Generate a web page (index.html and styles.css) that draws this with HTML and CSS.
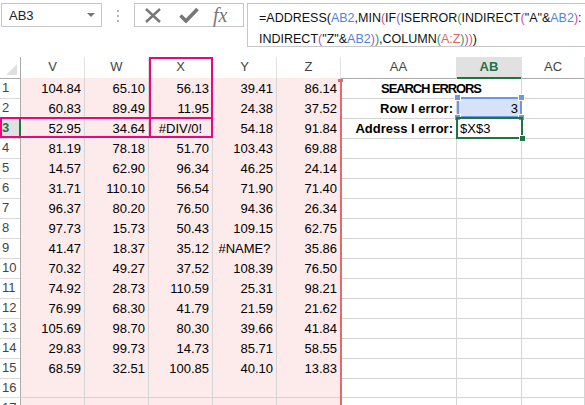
FILE: index.html
```html
<!DOCTYPE html>
<html lang="en">

<head>
	<meta charset="UTF-8">
	<title>Search errors</title>
	<link rel="stylesheet" href="styles.css">
</head>

<body>
	<div class="topbar">
		<div class="name-box"><span>AB3</span><span class="arrow"></span></div>
		<div class="grip"><i></i><i></i><i></i></div>
		<div class="fx-buttons">
			<svg width="18" height="15" viewBox="0 0 18 15"><path d="M2 1 L16 14 M16 1 L2 14" stroke="#777" stroke-width="2.4" fill="none"/></svg>
			<svg width="20" height="16" viewBox="0 0 20 16"><path d="M1.5 8.5 L7 14 L18.5 2" stroke="#777" stroke-width="3.6" fill="none"/></svg>
			<span class="fx">fx</span>
		</div>
		<div class="formula">=ADDRESS(<span class="ref">AB2</span>,MIN<span class="p1">(</span>IF<span class="p2">(</span>ISERROR<span class="p3">(</span>INDIRECT<span class="p4">(</span>"A"&amp;<span class="ref">AB2</span><span class="p4">)</span>:<br>INDIRECT<span class="p4">(</span>"Z"&amp;<span class="ref">AB2</span><span class="p4">)</span><span class="p3">)</span>,COLUMN<span class="p3">(</span><span class="rng">A:Z</span><span class="p3">)</span><span class="p2">)</span><span class="p1">)</span>)</div>
	</div>

	<div class="sheet">
		<div class="row head">
			<div class="corner"></div>
			<div>V</div><div>W</div><div>X</div><div>Y</div><div>Z</div><div>AA</div><div class="sel">AB</div><div>AC</div>
		</div>
		<div class="row"><div class="rh">1</div><div class="c p">104.84</div><div class="c p">65.10</div><div class="c p">56.13</div><div class="c p">39.41</div><div class="c p">86.14</div><div class="c title">SEARCH ERRORS</div><div class="c"></div></div>
		<div class="row"><div class="rh">2</div><div class="c p">60.83</div><div class="c p">89.49</div><div class="c p">11.95</div><div class="c p">24.38</div><div class="c p">37.52</div><div class="c label">Row I error:</div><div class="c blue">3</div><div class="c"></div></div>
		<div class="row"><div class="rh sel">3</div><div class="c p">52.95</div><div class="c p">34.64</div><div class="c p err">#DIV/0!</div><div class="c p">54.18</div><div class="c p">91.84</div><div class="c label">Address I error:</div><div class="c txt">$X$3</div><div class="c"></div></div>
		<div class="row"><div class="rh">4</div><div class="c p">81.19</div><div class="c p">78.18</div><div class="c p">51.70</div><div class="c p">103.43</div><div class="c p">69.88</div><div class="c"></div><div class="c"></div><div class="c"></div></div>
		<div class="row"><div class="rh">5</div><div class="c p">14.57</div><div class="c p">62.90</div><div class="c p">96.34</div><div class="c p">46.25</div><div class="c p">24.14</div><div class="c"></div><div class="c"></div><div class="c"></div></div>
		<div class="row"><div class="rh">6</div><div class="c p">31.71</div><div class="c p">110.10</div><div class="c p">56.54</div><div class="c p">71.90</div><div class="c p">71.40</div><div class="c"></div><div class="c"></div><div class="c"></div></div>
		<div class="row"><div class="rh">7</div><div class="c p">96.37</div><div class="c p">80.20</div><div class="c p">76.50</div><div class="c p">94.36</div><div class="c p">26.34</div><div class="c"></div><div class="c"></div><div class="c"></div></div>
		<div class="row"><div class="rh">8</div><div class="c p">97.73</div><div class="c p">15.73</div><div class="c p">50.43</div><div class="c p">109.15</div><div class="c p">62.75</div><div class="c"></div><div class="c"></div><div class="c"></div></div>
		<div class="row"><div class="rh">9</div><div class="c p">41.47</div><div class="c p">18.37</div><div class="c p">35.12</div><div class="c p err">#NAME?</div><div class="c p">35.86</div><div class="c"></div><div class="c"></div><div class="c"></div></div>
		<div class="row"><div class="rh">10</div><div class="c p">70.32</div><div class="c p">49.27</div><div class="c p">37.52</div><div class="c p">108.39</div><div class="c p">76.50</div><div class="c"></div><div class="c"></div><div class="c"></div></div>
		<div class="row"><div class="rh">11</div><div class="c p">74.92</div><div class="c p">28.73</div><div class="c p">110.59</div><div class="c p">25.31</div><div class="c p">98.21</div><div class="c"></div><div class="c"></div><div class="c"></div></div>
		<div class="row"><div class="rh">12</div><div class="c p">76.99</div><div class="c p">68.30</div><div class="c p">41.79</div><div class="c p">21.59</div><div class="c p">21.62</div><div class="c"></div><div class="c"></div><div class="c"></div></div>
		<div class="row"><div class="rh">13</div><div class="c p">105.69</div><div class="c p">98.70</div><div class="c p">80.30</div><div class="c p">39.66</div><div class="c p">41.84</div><div class="c"></div><div class="c"></div><div class="c"></div></div>
		<div class="row"><div class="rh">14</div><div class="c p">29.83</div><div class="c p">99.73</div><div class="c p">14.73</div><div class="c p">85.71</div><div class="c p">58.55</div><div class="c"></div><div class="c"></div><div class="c"></div></div>
		<div class="row"><div class="rh">15</div><div class="c p">68.59</div><div class="c p">32.51</div><div class="c p">100.85</div><div class="c p">40.10</div><div class="c p">13.83</div><div class="c"></div><div class="c"></div><div class="c"></div></div>
		<div class="row"><div class="rh">16</div><div class="c p"></div><div class="c p"></div><div class="c p"></div><div class="c p"></div><div class="c p"></div><div class="c"></div><div class="c"></div><div class="c"></div></div>
		<div class="row"><div class="rh">17</div><div class="c p"></div><div class="c p"></div><div class="c p"></div><div class="c p"></div><div class="c p"></div><div class="c"></div><div class="c"></div><div class="c"></div></div>

		<!-- overlays: trace boxes, reference range, selection -->
		<div class="trace-col"></div>
		<div class="trace-row"></div>
		<div class="range-edge"></div>
		<div class="ref-box"><i class="h tl"></i><i class="h tr"></i><i class="h bl"></i><i class="h br"></i></div>
		<div class="cursor"><i class="fill"></i></div>
	</div>
</body>

</html>
```

FILE: styles.css
```css
html,
body
{
	margin: 0;
	width: 585px;
	height: 405px;
	overflow: hidden;
	background-color: #fff;
	font-family: 'Liberation Sans', Arial, sans-serif;
	color: #000;
}

.topbar
{
	display: flex;
	align-items: flex-start;
	height: 57px;
	padding-top: 3px;
	box-sizing: border-box;
}

.name-box
{
	display: flex;
	align-items: center;
	justify-content: space-between;
	width: 101px;
	height: 24px;
	margin-left: 1px;
	padding: 0 6px 0 7px;
	border: 1px solid #c6c6c6;
	box-sizing: border-box;
	font-size: 13px;
	color: #222;
}

.arrow
{
	border-left: 4px solid transparent;
	border-right: 4px solid transparent;
	border-top: 4px solid #777;
}

.grip
{
	display: flex;
	flex-direction: column;
	gap: 3px;
	margin: 7px 15px 0 15px;
}

.grip i
{
	width: 2px;
	height: 2px;
	background-color: #b3b3b3;
}

.fx-buttons
{
	display: flex;
	align-items: center;
	width: 110px;
	height: 24px;
	padding-left: 9px;
	border: 1px solid #c6c6c6;
	box-sizing: border-box;
}

.fx-buttons svg:nth-child(2)
{
	margin-left: 17px;
}

.fx
{
	margin-left: 14px;
	font-family: 'Liberation Serif', serif;
	font-style: italic;
	font-size: 20px;
	color: #777;
	line-height: 20px;
}

.formula
{
	flex: 1;
	height: 44px;
	margin-left: 3px;
	padding: 4px 0 0 11px;
	border: 1px solid #c6c6c6;
	border-right: none;
	box-sizing: border-box;
	font-size: 12.5px;
	line-height: 21px;
	white-space: nowrap;
	color: #111;
}

.ref { color: #4f84db; }
.rng { color: #e06464; }
.p1 { color: #e0507a; }
.p2 { color: #9957c6; }
.p3 { color: #2f9c60; }
.p4 { color: #c24ab7; }

.sheet
{
	position: relative;
	font-size: 13px;
}

.row
{
	display: grid;
	grid-template-columns: 21px 64px 64px 64px 64px 64px 116px 65px 1fr;
	height: 20px;
}

.row > div
{
	box-sizing: border-box;
	border-right: 1px solid #d4d4d4;
	border-bottom: 1px solid #d4d4d4;
	line-height: 19px;
	white-space: nowrap;
}

.head
{
	height: 21px;
}

.head > div
{
	text-align: center;
	color: #444;
	line-height: 20px;
	border-right-color: #e1e1e1;
	border-bottom-color: #ababab;
}

.head .corner
{
	position: relative;
	border-right-color: #ababab;
}

.corner::after
{
	content: '';
	position: absolute;
	right: 3px;
	bottom: 3px;
	border-left: 11px solid transparent;
	border-bottom: 11px solid #dfdfdf;
}

.head .sel
{
	background-color: #e1e1e1;
	color: #217346;
	font-weight: bold;
	border-bottom: 2px solid #217346;
}

.row .rh
{
	padding-left: 2px;
	color: #444;
	border-right-color: #ababab;
	border-bottom-color: #dadada;
}

.row .rh.sel
{
	background-color: #e1e1e1;
	color: #217346;
	font-weight: bold;
	border-right: 2px solid #217346;
}

.c
{
	padding: 1px 3px 0 3px;
	text-align: right;
	overflow: visible;
}

.p
{
	background-color: #fdebeb;
}

.err
{
	text-align: center;
}

.title
{
	grid-column: span 2;
	text-align: center;
	font-weight: bold;
	letter-spacing: -1.1px;
}

.label
{
	font-weight: bold;
}

.blue
{
	background-color: #d7e1f7;
}

.txt
{
	text-align: left;
}

.trace-col,
.trace-row,
.range-edge,
.ref-box,
.cursor
{
	position: absolute;
	box-sizing: border-box;
}

.trace-col
{
	left: 149px;
	top: 0;
	width: 64px;
	height: 81px;
	border: 2px solid #e5087f;
}

.trace-row
{
	left: 0;
	top: 60px;
	width: 213px;
	height: 21px;
	border: 2px solid #e5087f;
}

.range-edge
{
	left: 340px;
	top: 22px;
	width: 2px;
	height: 340px;
	background-color: #e36a6a;
}

.range-edge::before
{
	content: '';
	position: absolute;
	left: -2px;
	top: 0;
	width: 5px;
	height: 3px;
	background-color: #e36a6a;
}

.ref-box
{
	left: 457px;
	top: 40px;
	width: 65px;
	height: 21px;
	border: 2px solid #6f97e1;
}

.ref-box .h
{
	position: absolute;
	width: 5px;
	height: 5px;
	background-color: #6f97e1;
	outline: 1px solid #fff;
}

.h.tl { left: -4px; top: -4px; }
.h.tr { right: -4px; top: -4px; }
.h.bl { left: -4px; bottom: -4px; }
.h.br { right: -4px; bottom: -4px; }

.cursor
{
	left: 456px;
	top: 60px;
	width: 67px;
	height: 22px;
	border: 2px solid #217346;
}

.cursor .fill
{
	position: absolute;
	right: -4px;
	bottom: -4px;
	width: 5px;
	height: 5px;
	background-color: #217346;
	outline: 1px solid #fff;
}
```
